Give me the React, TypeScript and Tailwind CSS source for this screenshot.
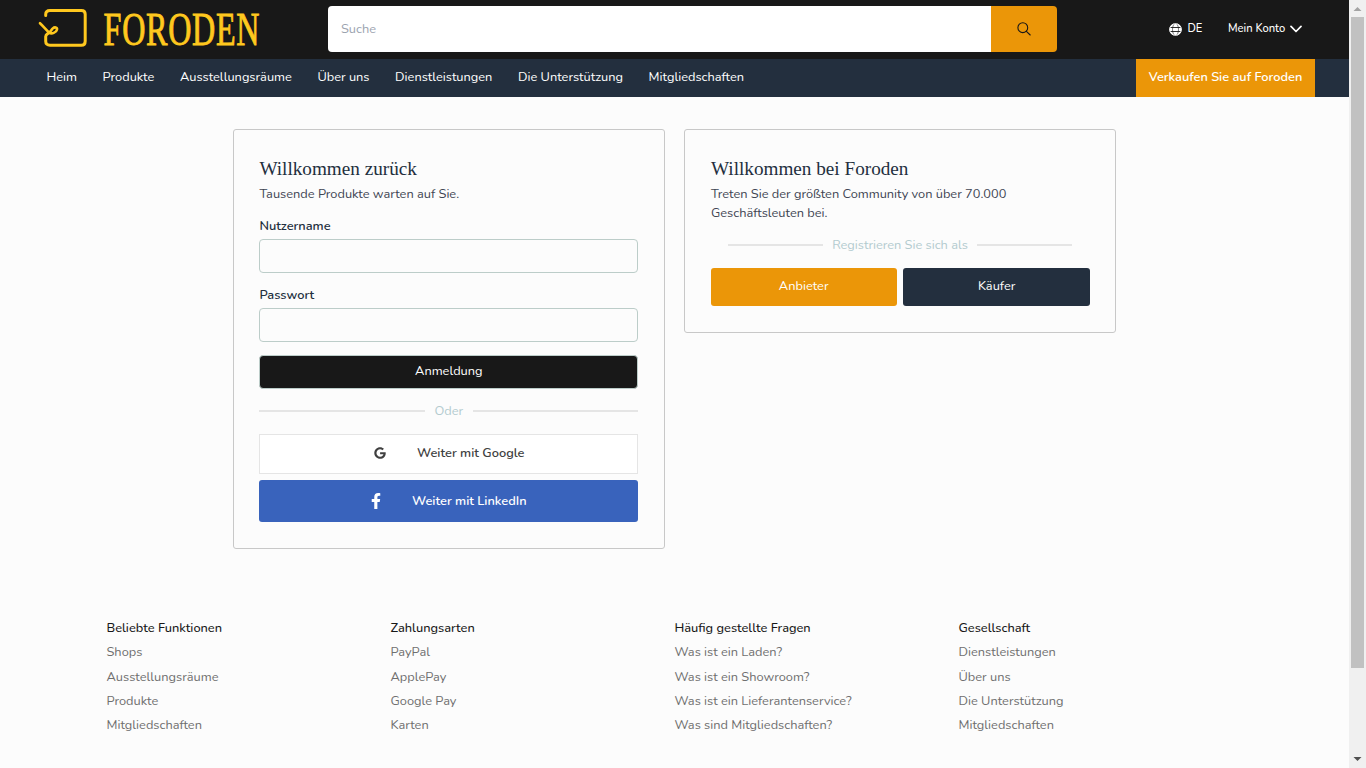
import type { ReactNode } from "react";
import { FaFacebookF, FaGoogle } from "react-icons/fa";

const navLinks = [
  "Heim",
  "Produkte",
  "Ausstellungsräume",
  "Über uns",
  "Dienstleistungen",
  "Die Unterstützung",
  "Mitgliedschaften",
];

const footerColumns = [
  { title: "Beliebte Funktionen", links: ["Shops", "Ausstellungsräume", "Produkte", "Mitgliedschaften"] },
  { title: "Zahlungsarten", links: ["PayPal", "ApplePay", "Google Pay", "Karten"] },
  {
    title: "Häufig gestellte Fragen",
    links: [
      "Was ist ein Laden?",
      "Was ist ein Showroom?",
      "Was ist ein Lieferantenservice?",
      "Was sind Mitgliedschaften?",
    ],
  },
  { title: "Gesellschaft", links: ["Dienstleistungen", "Über uns", "Die Unterstützung", "Mitgliedschaften"] },
];

function Logo() {
  return (
    <svg width="290" height="58" viewBox="0 0 290 58" className="block shrink-0 overflow-visible" aria-label="Foroden">
      <g fill="none" stroke="#ffc81e" strokeLinecap="round" strokeLinejoin="round">
        <path d="M7.7 15.6V14.4C7.7 11.6 9.4 10.4 12 10.4H43.3C46 10.4 47.2 11.8 47.2 14.2V41.2C47.2 43.8 46 45.2 43.3 45.2H12C9.2 45.2 7.7 44 7.7 41.2V36.4C7.7 34.4 9.4 34 11.4 32.4" strokeWidth="3" />
        <path d="M2 23.2C5.2 26 7.6 29.2 11 32.4C13.6 34.6 18.4 32.4 19 29.4C19.4 27.2 16.6 26.8 14.8 28.4C13.4 29.6 13 31.2 11.4 32.4" strokeWidth="2.6" />
      </g>
      <text
        transform="translate(65.6 44.8) scale(0.706 1)"
        fill="#ffc81e"
        stroke="#ffc81e"
        strokeWidth="0.9"
        fontSize="45.5"
        letterSpacing="1"
        fontFamily="'Liberation Serif', serif"
      >
        FORODEN
      </text>
    </svg>
  );
}

function GlobeIcon() {
  return (
    <svg width="13" height="13" viewBox="0 0 13 13" className="block">
      <circle cx="6.5" cy="6.5" r="6.2" fill="#fff" />
      <g fill="none" stroke="#181818">
        <ellipse cx="6.5" cy="6.5" rx="3" ry="6.2" strokeWidth="0.6" />
        <path d="M1.2 4.5H11.8M1.2 8.5H11.8" strokeWidth="0.9" />
      </g>
      <circle cx="6.5" cy="6.5" r="5.7" fill="none" stroke="#fff" strokeWidth="0.9" />
    </svg>
  );
}

function Header() {
  return (
    <header className="flex h-[59px] items-start bg-[#181818] text-white">
      <div className="w-[328px] pl-[38px]">
        <Logo />
      </div>
      <div className="mt-1.5 flex h-[46px] w-[729px] overflow-hidden rounded">
        <div className="flex flex-1 items-center bg-white pt-0.5 pl-[13px] text-[#9ca3af]">Suche</div>
        <button className="flex w-[66px] items-center justify-center bg-[#eb9608] text-[#181818]">
          <svg width="14" height="14" viewBox="0 0 14 14" fill="none" stroke="currentColor" strokeWidth="1.1" strokeLinecap="round">
            <circle cx="5.8" cy="5.7" r="4.9" />
            <path d="M9.4 9.3L13.2 13" />
          </svg>
        </button>
      </div>
      <div className="ml-[112px] flex h-[58px] items-center text-[11.2px] font-medium">
        <GlobeIcon />
        <span className="ml-[5.5px]">DE</span>
        <span className="ml-[25.5px]">Mein Konto</span>
        <svg className="ml-[5px]" width="12" height="8" viewBox="0 0 12 8" fill="none" stroke="currentColor" strokeWidth="1.7" strokeLinecap="round" strokeLinejoin="round">
          <path d="M1 1.4L6 6.5L11 1.4" />
        </svg>
      </div>
    </header>
  );
}

function NavBar() {
  return (
    <nav className="flex h-[38px] justify-between bg-[#232f3e] pr-[34px] pl-[46.5px] text-white">
      <ul className="flex gap-[25.6px] pt-[9px]">
        {navLinks.map((link) => (
          <li key={link}>{link}</li>
        ))}
      </ul>
      <a className="w-[179px] bg-[#eb9608] pt-[9px] text-center font-semibold">Verkaufen Sie auf Foroden</a>
    </nav>
  );
}

function Divider({ children }: { children: ReactNode }) {
  return (
    <div className="flex items-center gap-[9.6px] text-[#b3cbcf]">
      <span className="h-0.5 flex-1 bg-[#e5e5e5]" />
      <span>{children}</span>
      <span className="h-0.5 flex-1 bg-[#e5e5e5]" />
    </div>
  );
}

function Field({ label, type }: { label: string; type: string }) {
  return (
    <label className="block font-semibold text-[#232f3e]">
      {label}
      <input type={type} className="mt-[3.6px] block h-[34px] w-full rounded border border-[#bccdc9] bg-transparent" />
    </label>
  );
}

function Card({ title, children }: { title: string; children: ReactNode }) {
  return (
    <section className="w-[432px] rounded-[3px] border border-[#c8c8c8] px-[25.6px] pt-[24.6px] pb-[26px]">
      <h1 className="mb-[2.6px] font-['Liberation_Serif',serif] text-[19.2px] leading-[27.4px] text-[#232f3e]">{title}</h1>
      {children}
    </section>
  );
}

function LoginCard() {
  return (
    <Card title="Willkommen zurück">
      <p className="mb-[12.8px] text-[#404553]">Tausende Produkte warten auf Sie.</p>
      <Field label="Nutzername" type="text" />
      <div className="h-[12.2px]" />
      <Field label="Passwort" type="password" />
      <button className="mt-[13px] block h-[34px] w-full rounded border border-[#bccdc9] bg-[#181818] pb-px text-white">
        Anmeldung
      </button>
      <div className="mt-[12.2px] mb-[13.2px]">
        <Divider>Oder</Divider>
      </div>
      <button className="flex h-[40px] w-full items-center justify-center border border-[#e5e5e5] bg-white pb-[3px] font-semibold text-[#404040]">
        <FaGoogle size={12} className="mt-px mr-[31px] ml-px" />
        <span className="pt-0.5">Weiter mit Google</span>
      </button>
      <button className="mt-1.5 flex h-[42px] w-full items-center justify-center rounded-[3px] bg-[#3963bc] pr-[3px] font-semibold text-white">
        <FaFacebookF size={16} className="mr-[28px]" />
        <span className="pt-px">Weiter mit LinkedIn</span>
      </button>
    </Card>
  );
}

function RegisterCard() {
  return (
    <Card title="Willkommen bei Foroden">
      <p className="pr-[60px] text-[#404553]">
        Treten Sie der größten Community von über 70.000 Geschäftsleuten bei.
      </p>
      <div className="mt-[12.8px] mr-[17.8px] mb-[13px] ml-[17px]">
        <Divider>Registrieren Sie sich als</Divider>
      </div>
      <div className="grid grid-cols-2 gap-1.5 text-white">
        <button className="h-[38px] rounded-[3px] bg-[#eb9608] pr-px">Anbieter</button>
        <button className="h-[38px] rounded-[3px] bg-[#232f3e]">Käufer</button>
      </div>
    </Card>
  );
}

function Footer() {
  return (
    <footer className="mt-[70.3px] grid grid-cols-[repeat(4,284px)] pl-[106.5px] text-[#6f6f6f]">
      {footerColumns.map((column) => (
        <div key={column.title}>
          <h2 className="mb-[4.8px] font-medium text-[#181818]">{column.title}</h2>
          <ul className="space-y-[5.12px]">
            {column.links.map((link) => (
              <li key={link}>{link}</li>
            ))}
          </ul>
        </div>
      ))}
    </footer>
  );
}

function Scrollbar() {
  return (
    <div className="flex w-[17px] flex-col items-center justify-between bg-[#f0f0f0]" aria-hidden="true">
      <div className="flex w-full flex-col items-center">
        <svg width="17" height="17" viewBox="0 0 17 17">
          <path d="M4.5 11L8.5 7L12.5 11Z" fill="#a3a3a3" />
        </svg>
        <div className="h-[651px] w-[13px] bg-[#c1c1c1]" />
      </div>
      <svg width="17" height="17" viewBox="0 0 17 17">
        <path d="M4.5 6L8.5 10L12.5 6Z" fill="#505050" />
      </svg>
    </div>
  );
}

export default function App() {
  return (
    <div className="flex h-[768px] w-[1366px] overflow-hidden bg-[#fcfcfc] font-['Nunito','Lato',sans-serif] text-[12.8px] leading-[19.2px]">
      <div className="w-[1349px]">
        <Header />
        <NavBar />
        <main className="mt-8 flex items-start gap-[19.6px] pl-[232.8px]">
          <LoginCard />
          <RegisterCard />
        </main>
        <Footer />
      </div>
      <Scrollbar />
    </div>
  );
}
